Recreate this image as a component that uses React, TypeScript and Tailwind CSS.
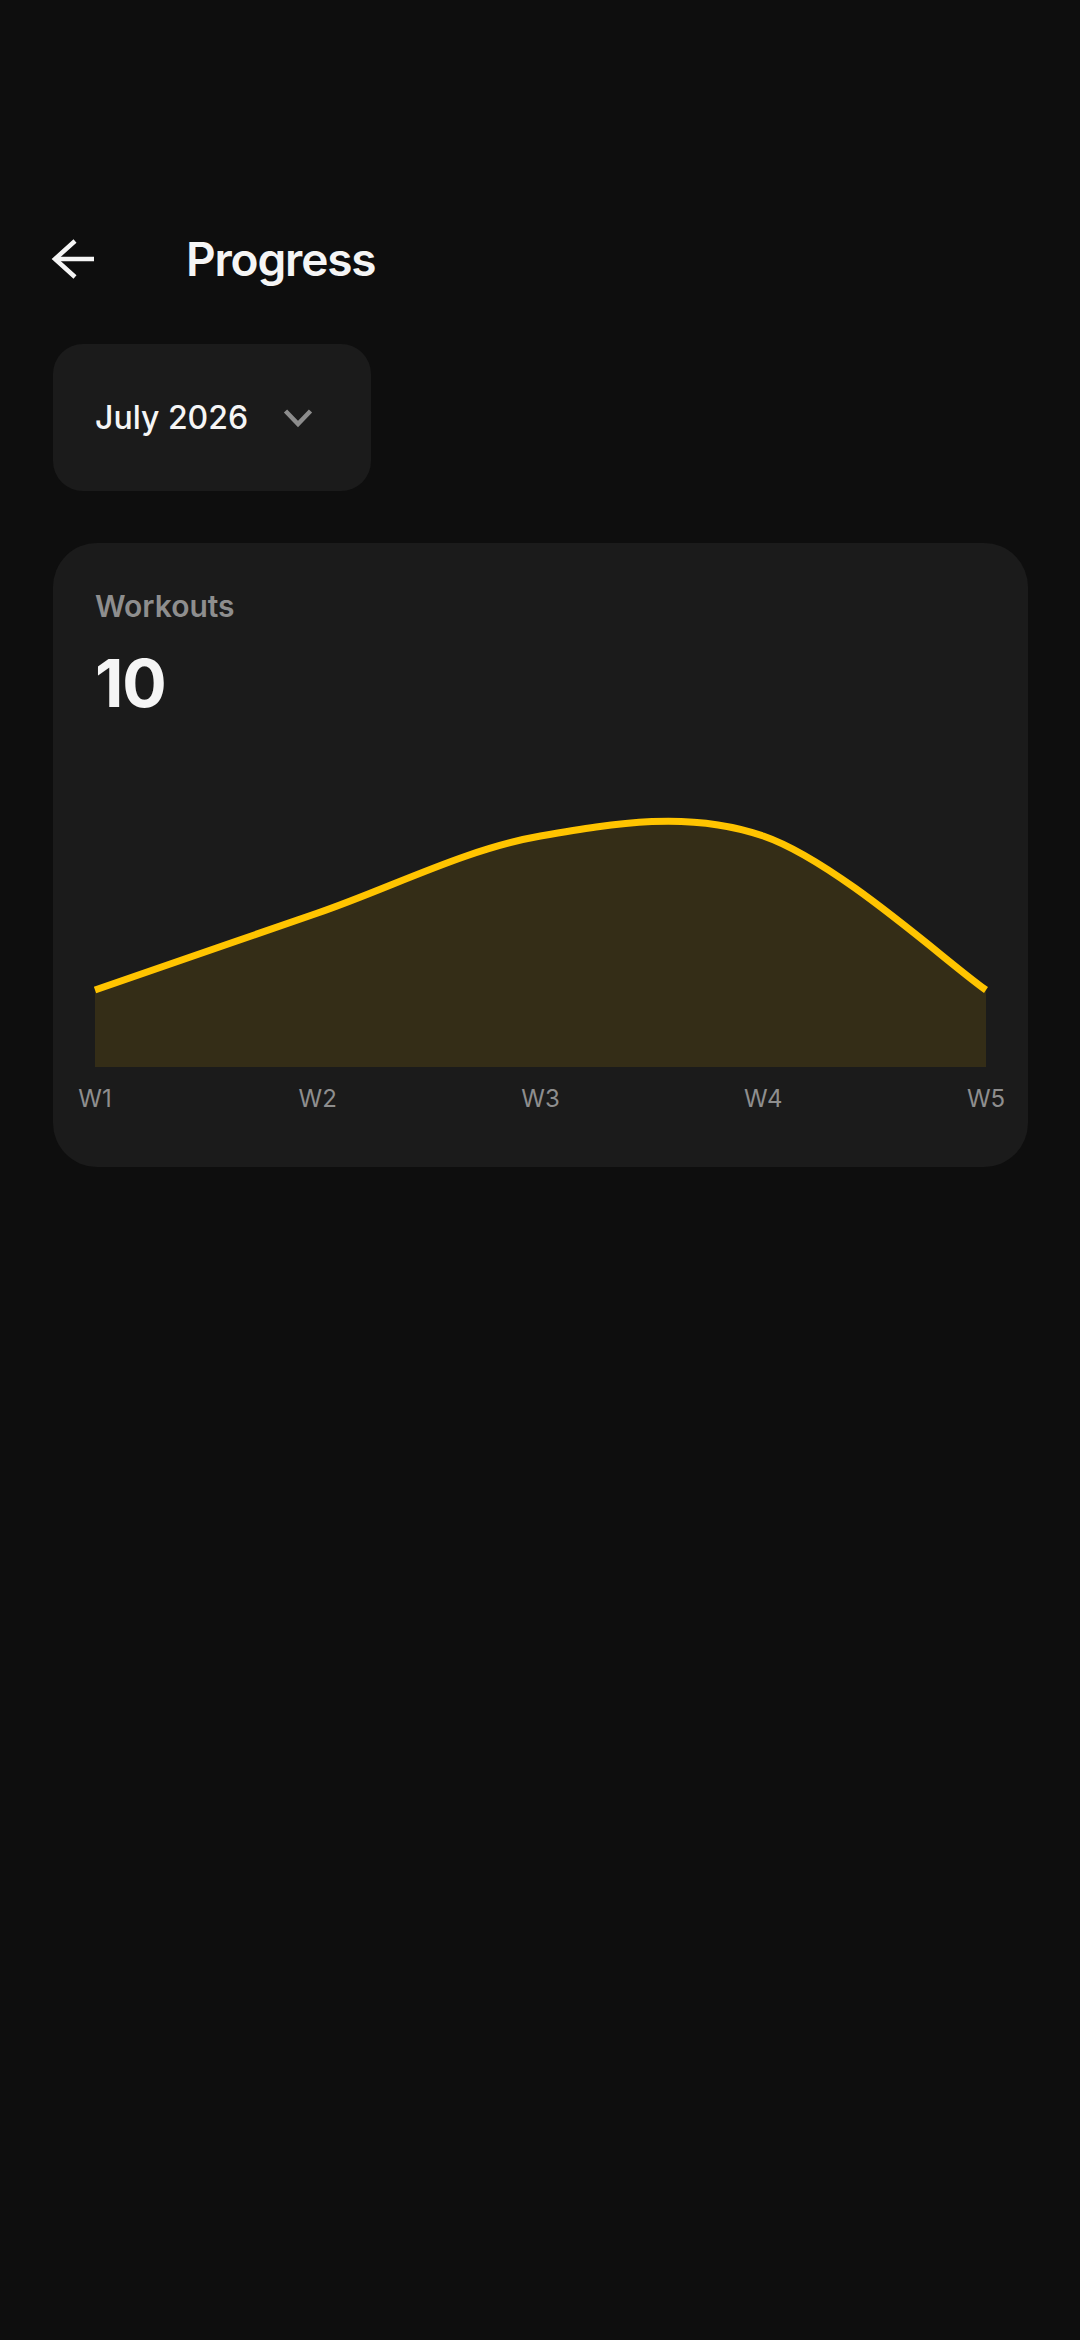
import React from "react";

const VALUES = [1, 2, 3, 3, 1];
const LABELS = ["W1", "W2", "W3", "W4", "W5"];
const X0 = 42;
const STEP = 222.75;
const BASE = 351;
const UNIT = 77;

function cardinalPath(xs: number[], ys: number[]) {
  const n = xs.length;
  let d = `M${xs[0]},${ys[0]}`;
  for (let i = 0; i < n - 1; i++) {
    const x0 = xs[Math.max(0, i - 1)];
    const y0 = ys[Math.max(0, i - 1)];
    const x1 = xs[i];
    const y1 = ys[i];
    const x2 = xs[i + 1];
    const y2 = ys[i + 1];
    const x3 = xs[Math.min(n - 1, i + 2)];
    const y3 = ys[Math.min(n - 1, i + 2)];
    const c1x = x1 + (x2 - x0) / 6;
    const c1y = y1 + (y2 - y0) / 6;
    const c2x = x2 - (x3 - x1) / 6;
    const c2y = y2 - (y3 - y1) / 6;
    d += ` C${c1x},${c1y} ${c2x},${c2y} ${x2},${y2}`;
  }
  return d;
}

function Chart() {
  const xs = VALUES.map((_, i) => X0 + i * STEP);
  const ys = VALUES.map((v) => BASE - v * UNIT);
  const line = cardinalPath(xs, ys);
  const area = `${line} L${xs[xs.length - 1]},${BASE} L${xs[0]},${BASE} Z`;
  return (
    <svg width="975" height="404" viewBox="0 0 975 404" className="block">
      <path d={area} fill="#ffc400" fillOpacity={0.115} />
      <path d={line} fill="none" stroke="#ffc400" strokeWidth={7} strokeLinecap="butt" strokeLinejoin="round" />
      {LABELS.map((l, i) => (
        <text
          key={l}
          x={xs[i]}
          y={391}
          textAnchor="middle"
          fill="#8e8e8e"
          fontSize={24}
          fontFamily="Inter, 'Noto Sans', sans-serif"
        >
          {l}
        </text>
      ))}
    </svg>
  );
}

export default function App() {
  return (
    <div
      className="min-h-[2340px] w-full bg-[#0e0e0e] text-[#f5f5f5]"
      style={{ fontFamily: "Inter, 'Noto Sans', sans-serif" }}
    >
      <div className="flex items-center pt-[236px] pl-[50px]">
        <svg width="46" height="46" viewBox="0 0 46 46" fill="none" stroke="#f5f5f5" strokeWidth={4.5}>
          <path d="M25 5 L5 23 L25 41" strokeLinejoin="miter" />
          <path d="M5 23 H44" />
        </svg>
        <h1 className="ml-[90px] text-[46px] leading-[46px] font-semibold tracking-[-0.025em]">Progress</h1>
      </div>

      <div className="pl-[53px] pr-[52px]">
        <div className="mt-[62px] flex h-[147px] w-[318px] items-center rounded-[30px] bg-[#1b1b1b] pl-[42px]">
          <span className="text-[32px] leading-[40px] font-medium">July 2026</span>
          <svg width="32" height="22" viewBox="0 0 32 22" fill="none" stroke="#8c8c8c" strokeWidth={4.5} className="ml-[34px]">
            <path d="M3.5 4 L16 17 L28.5 4" />
          </svg>
        </div>

        <div className="mt-[52px] rounded-[44px] bg-[#1b1b1b] pt-[45px] pb-[47px]">
          <div className="pl-[42px]">
            <div className="text-[30px] leading-[36px] font-semibold text-[#8e8e8e]">Workouts</div>
            <div className="mt-[26px] text-[66px] leading-[66px] font-bold tracking-[-0.02em]">10</div>
          </div>
          <Chart />
        </div>
      </div>
    </div>
  );
}
